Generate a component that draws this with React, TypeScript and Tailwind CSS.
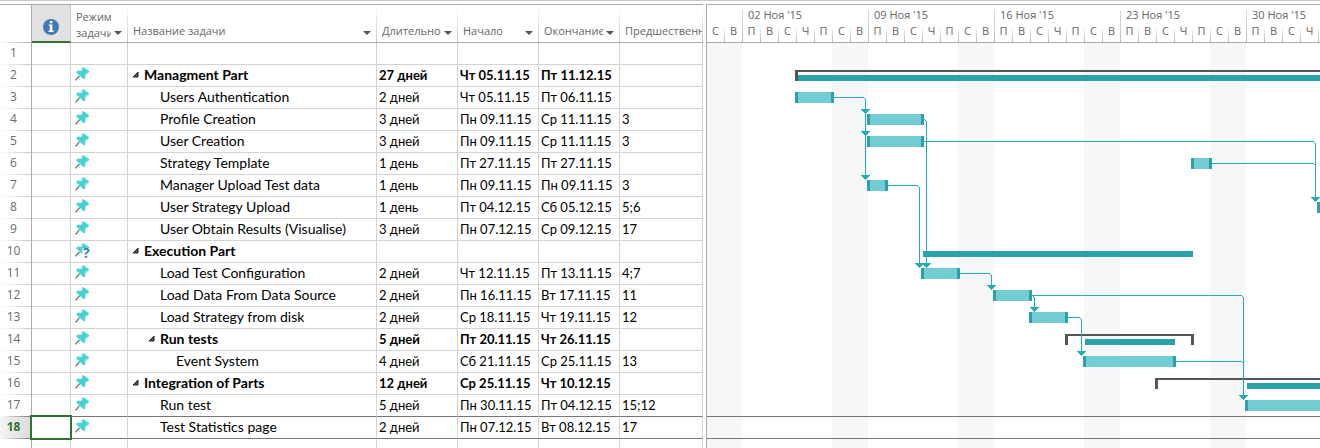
import React from "react";

type Task = {
  id: number;
  name?: string;
  level?: number;
  summary?: boolean;
  duration?: string;
  start?: string;
  finish?: string;
  preds?: string;
  unsure?: boolean;
};

const tasks: Task[] = [
  { id: 1 },
  { id: 2, name: "Managment Part", level: 0, summary: true, duration: "27 дней", start: "Чт 05.11.15", finish: "Пт 11.12.15" },
  { id: 3, name: "Users Authentication", level: 1, duration: "2 дней", start: "Чт 05.11.15", finish: "Пт 06.11.15" },
  { id: 4, name: "Profile Creation", level: 1, duration: "3 дней", start: "Пн 09.11.15", finish: "Ср 11.11.15", preds: "3" },
  { id: 5, name: "User Creation", level: 1, duration: "3 дней", start: "Пн 09.11.15", finish: "Ср 11.11.15", preds: "3" },
  { id: 6, name: "Strategy Template", level: 1, duration: "1 день", start: "Пт 27.11.15", finish: "Пт 27.11.15" },
  { id: 7, name: "Manager Upload Test data", level: 1, duration: "1 день", start: "Пн 09.11.15", finish: "Пн 09.11.15", preds: "3" },
  { id: 8, name: "User Strategy Upload", level: 1, duration: "1 день", start: "Пт 04.12.15", finish: "Сб 05.12.15", preds: "5;6" },
  { id: 9, name: "User Obtain Results (Visualise)", level: 1, duration: "3 дней", start: "Пн 07.12.15", finish: "Ср 09.12.15", preds: "17" },
  { id: 10, name: "Execution Part", level: 0, summary: true, unsure: true },
  { id: 11, name: "Load Test Configuration", level: 1, duration: "2 дней", start: "Чт 12.11.15", finish: "Пт 13.11.15", preds: "4;7" },
  { id: 12, name: "Load Data From Data Source", level: 1, duration: "2 дней", start: "Пн 16.11.15", finish: "Вт 17.11.15", preds: "11" },
  { id: 13, name: "Load Strategy from disk", level: 1, duration: "2 дней", start: "Ср 18.11.15", finish: "Чт 19.11.15", preds: "12" },
  { id: 14, name: "Run tests", level: 1, summary: true, duration: "5 дней", start: "Пт 20.11.15", finish: "Чт 26.11.15" },
  { id: 15, name: "Event System", level: 2, duration: "4 дней", start: "Сб 21.11.15", finish: "Ср 25.11.15", preds: "13" },
  { id: 16, name: "Integration of Parts", level: 0, summary: true, duration: "12 дней", start: "Ср 25.11.15", finish: "Чт 10.12.15" },
  { id: 17, name: "Run test", level: 1, duration: "5 дней", start: "Пн 30.11.15", finish: "Пт 04.12.15", preds: "15;12" },
  { id: 18, name: "Test Statistics page", level: 1, duration: "2 дней", start: "Пн 07.12.15", finish: "Вт 08.12.15", preds: "17" },
];

const ROW = 22;
const SELECTED = 18;
const indents = ["pl-4", "pl-8", "pl-12"];

// Chart coordinates: x in pixels from the chart's left edge, 18 per day.
const bars = [
  { row: 3, x1: 88, x2: 127 },
  { row: 4, x1: 160, x2: 217 },
  { row: 5, x1: 160, x2: 217 },
  { row: 6, x1: 484, x2: 505 },
  { row: 7, x1: 160, x2: 181 },
  { row: 8, x1: 610, x2: 649 },
  { row: 11, x1: 214, x2: 253 },
  { row: 12, x1: 286, x2: 325 },
  { row: 13, x1: 322, x2: 361 },
  { row: 15, x1: 376, x2: 469 },
  { row: 17, x1: 538, x2: 631 },
];
const brackets = [
  { row: 2, x1: 88, x2: 757 },
  { row: 14, x1: 358, x2: 487 },
  { row: 16, x1: 448, x2: 739 },
];
const rollups = [
  { row: 2, x1: 91, x2: 754 },
  { row: 10, x1: 216, x2: 486 },
  { row: 14, x1: 378, x2: 468 },
  { row: 16, x1: 540, x2: 736 },
];
const links = [
  { from: 3, x: 127, to: 4, at: 158 },
  { from: 3, x: 127, to: 5, at: 158 },
  { from: 3, x: 127, to: 7, at: 158 },
  { from: 4, x: 217, to: 11, at: 219 },
  { from: 5, x: 217, to: 8, at: 608 },
  { from: 6, x: 505, to: 8, at: 608 },
  { from: 7, x: 181, to: 11, at: 212 },
  { from: 11, x: 253, to: 12, at: 284 },
  { from: 12, x: 325, to: 13, at: 327 },
  { from: 12, x: 325, to: 17, at: 536 },
  { from: 13, x: 361, to: 15, at: 374 },
  { from: 15, x: 469, to: 17, at: 536 },
];
const weekends = [-1, 125, 251, 377, 503, 629];
const weeks = ["02 Ноя '15", "09 Ноя '15", "16 Ноя '15", "23 Ноя '15", "30 Ноя '15"];
const days = ["П", "В", "С", "Ч", "П", "С", "В"];

const top = (row: number) => (row - 1) * ROW;

function Pin({ unsure }: { unsure?: boolean }) {
  return (
    <svg width="16" height="14" viewBox="0 0 16 14" className="block overflow-visible" aria-hidden="true">
      <path d="M4.6 8.6 L0.5 13.4" stroke="#6b7480" strokeWidth="1.4" fill="none" />
      <path d="M8 0 L14.2 4.2 L13 6.4 L11.4 6.2 L10.2 8.4 L10.4 10.8 L9 12.6 L1 5.2 L2.6 3.6 L5.8 4 L7.4 2.8 L6.9 1 Z" fill="#45d3d6" />
      {unsure && (
        <>
          <path d="M7.5 5h9v10.5h-9z" fill="#fff" />
          <text x="8" y="15" fontSize="14" fontWeight="700" fill="#3f78b8" fontFamily="Open Sans, sans-serif">
            ?
          </text>
        </>
      )}
    </svg>
  );
}

function Filter({ label }: { label: string }) {
  return (
    <button type="button" aria-label={label} className="mb-[7px] ml-[3px] flex h-2 w-2 shrink-0 items-end">
      <svg width="8" height="4" viewBox="0 0 8 4" className="block" aria-hidden="true">
        <path d="M0 0h8L4 4z" fill="#555" />
      </svg>
    </button>
  );
}

function HeadEdge() {
  return <span className="absolute inset-y-0 right-0 w-px bg-linear-to-b from-white to-[#c8c8c8]" />;
}

function Head({ title, filter = true }: { title: string; filter?: boolean }) {
  return (
    <th scope="col" className="relative border-b border-[#ababab] p-0 font-normal">
      <div className={`flex h-[37px] items-end pl-[5px] ${filter ? "pr-[6px]" : "pr-px"}`}>
        <span className="mb-[3px] min-w-0 flex-1 overflow-hidden whitespace-nowrap text-left leading-4">{title}</span>
        {filter && <Filter label={`Фильтр: ${title}`} />}
      </div>
      <HeadEdge />
    </th>
  );
}

function TaskTable() {
  const line = "border-r border-b border-r-[#d4d4d4]";
  return (
    <table className="w-[703px] shrink-0 table-fixed border-separate border-spacing-0 text-[11px] text-[#666]">
      <colgroup>
        <col className="w-[32px]" />
        <col className="w-[39px]" />
        <col className="w-[57px]" />
        <col className="w-[249px]" />
        <col className="w-[81px]" />
        <col className="w-[81px]" />
        <col className="w-[81px]" />
        <col className="w-[83px]" />
      </colgroup>
      <thead>
        <tr>
          <th className="relative border-r border-[#ababab] p-0" aria-label="№">
            <span className="absolute inset-x-0 bottom-0 h-px bg-linear-to-r from-white to-[#ababab]" />
          </th>
          <th scope="col" className="border-b-2 border-r border-r-[#c8c8c8] border-b-[#2f752f] bg-[#e1e1e1] p-0">
            <svg width="18" height="18" viewBox="0 0 18 18" className="mx-auto mt-2 block" role="img" aria-label="Индикаторы">
              <circle cx="9" cy="9" r="8" fill="#4179b5" />
              <path d="M7.8 3h2.6v2.2H7.8zM6.8 6.4h3.6v6h1.1V14H6.6v-1.6h1.2V7.8h-1z" fill="#fff" />
            </svg>
          </th>
          <th scope="col" className="relative border-b border-[#ababab] p-0 font-normal">
            <div className="flex h-[37px] items-end pl-[5px] pr-[6px]">
              <span className="mb-px h-8 min-w-0 flex-1 overflow-hidden text-left leading-4">
                Режим задачи
              </span>
              <Filter label="Фильтр: Режим задачи" />
            </div>
            <HeadEdge />
          </th>
          <Head title="Название задачи" />
          <Head title="Длительность" />
          <Head title="Начало" />
          <Head title="Окончание" />
          <Head title="Предшественники" filter={false} />
        </tr>
      </thead>
      <tbody className="font-['Lato','Open_Sans',sans-serif] text-[13px] leading-[18px] text-black">
        {tasks.map((t) => {
          const selected = t.id === SELECTED;
          const bottom = t.id >= SELECTED - 1 ? "border-b-[#777]" : "border-b-[#d4d4d4]";
          const fade = t.id >= SELECTED - 1 ? "to-[#777]" : "to-[#c8c8c8]";
          const cell = `${line} ${bottom} h-[22px] overflow-hidden whitespace-nowrap p-0 pb-0.5`;
          const weight = t.summary ? "font-bold" : "font-normal";
          return (
            <tr key={t.id}>
              <th
                scope="row"
                className={`relative h-[22px] border-r border-r-[#ababab] p-0 pr-1 pb-[3px] text-center font-['Open_Sans',sans-serif] text-[12px] leading-4 ${
                  selected ? "bg-linear-to-r from-[#f4f4f4] to-[#dcdcdc] font-bold text-[#2f752f]" : "font-normal text-[#6a6a6a]"
                }`}
              >
                {t.id}
                <span className={`absolute inset-x-0 bottom-0 h-px bg-linear-to-r from-white ${fade}`} />
              </th>
              <td className={`${line} ${bottom} relative h-[22px] p-0`}>
                {selected && <span className="absolute -inset-0.5 z-10 border-2 border-[#2f752f]" />}
              </td>
              <td className={`${line} ${bottom} h-[22px] p-0 pb-[3px] pl-1`}>{t.name && <Pin unsure={t.unsure} />}</td>
              <td className={cell}>
                {t.name && (
                  <div className={`flex items-center text-[14px] ${indents[t.level ?? 0]} ${weight}`}>
                    {t.summary && (
                      <button type="button" aria-label={`Свернуть ${t.name}`} className="-ml-3 w-3 shrink-0">
                        <svg width="7" height="7" viewBox="0 0 7 7" className="block" aria-hidden="true">
                          <path d="M6 1v5H1z" fill="#555" stroke="#222" strokeWidth="1" />
                        </svg>
                      </button>
                    )}
                    {t.name}
                  </div>
                )}
              </td>
              <td className={`${cell} pl-0.5 ${weight}`}>{t.duration}</td>
              <td className={`${cell} pl-0.5 ${weight}`}>{t.start}</td>
              <td className={`${cell} pl-0.5 ${weight}`}>{t.finish}</td>
              <td className={`${cell} pl-0.5`}>{t.preds}</td>
            </tr>
          );
        })}
        <tr>
          <td className="h-[22px] border-r border-[#ababab] p-0" />
          {[1, 2, 3, 4, 5, 6, 7].map((n) => (
            <td key={n} className="border-r border-[#d4d4d4] p-0" />
          ))}
        </tr>
      </tbody>
    </table>
  );
}

function Day({ label, last }: { label: string; last?: boolean }) {
  return (
    <span className={`flex h-[18px] shrink-0 ${last ? "w-[17px]" : "w-[18px]"}`}>
      <span className="w-[17px] text-center leading-[14px]">{label}</span>
      {!last && <span className="h-[13px] w-px self-end bg-linear-to-b from-[#eee] to-[#bbb]" />}
    </span>
  );
}

function Timescale() {
  return (
    <div className="flex h-[38px] items-end overflow-hidden border-b border-[#ababab] text-[11px] text-[#666]">
      <div className="flex w-[35px] shrink-0">
        <Day label="С" />
        <Day label="В" last />
      </div>
      {weeks.map((w) => (
        <div key={w} className="flex h-[37px] w-[126px] shrink-0">
          <span className="h-8 w-px shrink-0 self-end bg-linear-to-b from-[#ddd] to-[#bbb]" />
          <div className="flex flex-col justify-between">
            <span className="mt-0.5 whitespace-nowrap pl-[5px] leading-4">{w}</span>
            <div className="flex">
              {days.map((d, i) => (
                <Day key={i} label={d} last={i === 6} />
              ))}
            </div>
          </div>
        </div>
      ))}
    </div>
  );
}

function Chart() {
  return (
    <svg className="block h-[418px] w-full" shapeRendering="crispEdges" role="img" aria-label="Диаграмма Ганта">
      {weekends.map((x) => (
        <rect key={x} x={x} y="0" width="36" height="418" fill="#f7f7f7" />
      ))}
      <path d="M0 373.5H2000M0 395.5H2000" stroke="#777" />
      {brackets.map(({ row, x1, x2 }) => (
        <path
          key={row}
          d={`M${x1} ${top(row) + 5}H${x2}v11h-3v-9H${x1 + 3}v9h-3z`}
          fill="#555"
        />
      ))}
      {rollups.map(({ row, x1, x2 }) => (
        <rect key={row} x={x1} y={top(row) + 10} width={x2 - x1} height="6" fill="#2ba2ab" />
      ))}
      {bars.map(({ row, x1, x2 }) => (
        <g key={row}>
          <rect x={x1} y={top(row) + 5} width={x2 - x1} height="11" fill="#2ba2ab" />
          <rect x={x1 + 3} y={top(row) + 5} width={x2 - x1 - 6} height="11" fill="#74cdd4" />
        </g>
      ))}
      {links.map(({ from, x, to, at }) => {
        const y = top(from) + 10;
        const end = top(to);
        return (
          <g key={`${from}-${to}`} fill="#1eadb9">
            <rect x={x} y={y} width={at - x - 1} height="1" />
            <rect x={at - 1} y={y + 1} width="1" height="1" />
            <rect x={at} y={y + 2} width="1" height={end - y} />
            <path d={`M${at - 4} ${end}h9v1h-1v1h-1v1h-1v1h-1v1h-1v-1h-1v-1h-1v-1h-1v-1h-1z`} />
          </g>
        );
      })}
    </svg>
  );
}

export default function App() {
  return (
    <main className="h-screen overflow-hidden bg-white font-['Open_Sans','Noto_Sans',sans-serif]">
      <div className="h-1 border-t border-[#c8c8c8]" />
      <div className="flex">
        <section className="shrink-0 border-t border-[#ababab]">
          <TaskTable />
        </section>
        <div className="w-[3px] shrink-0" />
        <section className="min-w-0 flex-1 border-t border-l border-[#ababab]">
          <Timescale />
          <Chart />
        </section>
      </div>
    </main>
  );
}
